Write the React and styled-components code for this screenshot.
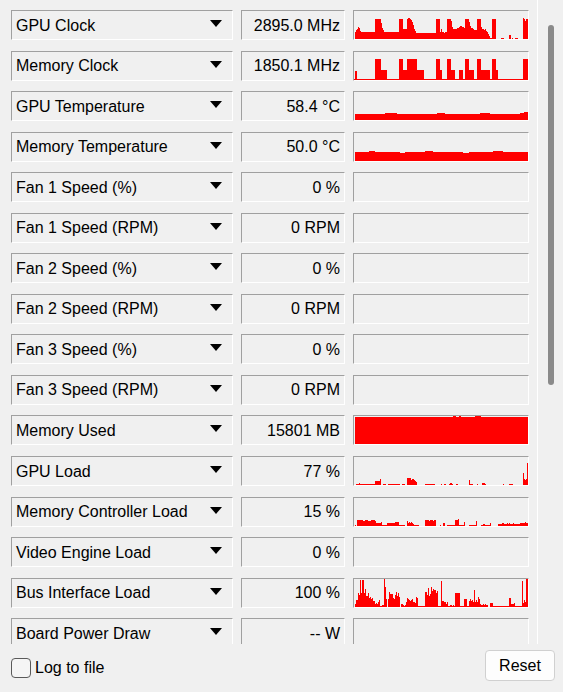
import React from 'react';
import styled, { createGlobalStyle } from 'styled-components';

const GlobalStyle = createGlobalStyle`
  html, body {
    margin: 0;
    padding: 0;
    background: #f0f0f0;
    overflow: hidden;
  }
  body {
    font-family: "Liberation Sans", Arial, sans-serif;
    font-size: 16px;
    color: #000;
  }
`;

// tiny seeded random so the graphs look the same on every run
const makeRandom = (seed) => () => {
  seed = (seed * 16807) % 2147483647;
  return seed / 2147483647;
};

// spec is a list of [width, height] or [width, minHeight, maxHeight]
const buildGraph = (spec, seed = 11) => {
  const rand = makeRandom(seed);
  const out = [];
  spec.forEach(([w, lo, hi]) => {
    for (let i = 0; i < w; i++) {
      out.push(hi == null ? lo : Math.round(lo + rand() * (hi - lo)));
    }
  });
  return out;
};

const graphs = {
  gpuClock: buildGraph([
    [1, 0], [1, 7], [1, 9], [1, 10], [1, 12], [1, 11], [1, 8],
    [14, 7], [6, 20], [1, 16], [1, 11], [1, 9], [15, 7],
    [4, 20], [4, 10],
    [1, 20], [2, 21], [1, 20], [1, 19], [1, 17], [1, 14], [1, 10], [1, 8],
    [20, 6], [4, 20],
    [1, 7], [1, 10], [2, 7], [1, 6], [2, 7],
    [4, 20], [1, 18], [1, 12], [4, 10],
    [2, 11], [1, 12], [2, 13], [2, 12], [1, 11],
    [4, 20], [1, 17], [1, 13], [2, 11], [1, 10], [3, 9],
    [4, 20], [1, 12], [2, 10], [1, 9], [1, 10], [1, 8], [1, 7], [1, 5], [1, 3],
    [2, 1], [4, 20],
    [5, 0], [3, 1], [5, 0], [2, 4], [1, 0], [1, 1], [2, 0], [3, 1], [5, 0],
    [1, 21], [1, 20], [1, 18], [2, 20],
  ]),
  memClock: buildGraph([
    [1, 1], [2, 9], [18, 1], [6, 21], [6, 10], [12, 1], [4, 21], [4, 10],
    [10, 21], [7, 10], [12, 1], [4, 21], [2, 10], [5, 1], [4, 21], [4, 10],
    [4, 1], [4, 10], [2, 1], [4, 21], [5, 10], [3, 1], [4, 21], [9, 10],
    [2, 1], [4, 21], [2, 10], [25, 1], [5, 21],
  ]),
  gpuTemp: buildGraph([
    [1, 0], [30, 6], [12, 7], [40, 6], [8, 7], [35, 6], [10, 7], [30, 6], [4, 7], [4, 8],
  ]),
  memTemp: buildGraph([
    [1, 0], [14, 9], [6, 10], [25, 9], [5, 8], [20, 9], [8, 10], [30, 9],
    [6, 8], [24, 9], [10, 10], [25, 9],
  ]),
  memUsed: buildGraph([
    [1, 0], [98, 27], [3, 28], [3, 27], [2, 28], [14, 27], [6, 28], [47, 27],
  ]),
  gpuLoad: buildGraph([
    [2, 0], [3, 1], [1, 2], [15, 1], [5, 4], [1, 6], [2, 0], [3, 1], [2, 0],
    [12, 1], [2, 0], [3, 1], [2, 0], [4, 7],
    [1, 5], [1, 6], [1, 6], [1, 5], [1, 4], [1, 3],
    [8, 0], [10, 1], [6, 0], [1, 1], [2, 0], [2, 1], [3, 0],
    [1, 1], [2, 2], [1, 1], [3, 0], [2, 1], [11, 0],
    [1, 5], [3, 1], [4, 0], [1, 1], [4, 0], [3, 2], [1, 1], [17, 0],
    [1, 1], [5, 0], [4, 1], [10, 0],
    [1, 12], [1, 6], [1, 5], [1, 6], [1, 22],
  ]),
  memCtrlLoad: buildGraph([
    [1, 0], [1, 1], [1, 0], [6, 6], [2, 5], [3, 6], [3, 5], [4, 6], [1, 5],
    [5, 3], [1, 4], [5, 1], [8, 3], [4, 4], [6, 1], [2, 0],
    [1, 5], [1, 3], [1, 4], [1, 3], [1, 4], [1, 3], [1, 2],
    [5, 1], [6, 0], [4, 6], [1, 5], [3, 6], [1, 5], [2, 6], [4, 0],
    [1, 1], [2, 0], [2, 3], [2, 0], [8, 1], [3, 6], [1, 7], [5, 1], [1, 4],
    [4, 0], [7, 1], [1, 5], [4, 0], [2, 1], [2, 2], [5, 1], [1, 3], [7, 0],
    [25, 2, 3], [2, 3], [1, 4], [2, 3],
  ], 3),
  busLoad: buildGraph([
    [1, 0], [3, 3, 8], [2, 11, 15], [1, 27], [1, 14], [2, 27], [6, 8, 18],
    [5, 6, 10], [5, 3, 8], [4, 1, 2], [1, 28], [1, 20], [1, 8], [1, 0],
    [12, 8, 15], [1, 0], [5, 1, 3], [12, 4, 10], [7, 1], [13, 10, 20],
    [3, 1], [1, 26], [6, 3, 6], [7, 1, 2], [5, 14], [4, 1], [3, 8], [2, 1],
    [5, 4, 10], [1, 17], [5, 4, 10], [8, 1, 3], [2, 0], [3, 4], [5, 1],
    [11, 1], [2, 9], [4, 2, 4], [7, 1], [1, 26], [3, 4, 8], [2, 28],
  ], 21),
};

const sensors = [
  { name: 'GPU Clock', value: '2895.0 MHz', graph: graphs.gpuClock },
  { name: 'Memory Clock', value: '1850.1 MHz', graph: graphs.memClock },
  { name: 'GPU Temperature', value: '58.4 °C', graph: graphs.gpuTemp },
  { name: 'Memory Temperature', value: '50.0 °C', graph: graphs.memTemp },
  { name: 'Fan 1 Speed (%)', value: '0 %' },
  { name: 'Fan 1 Speed (RPM)', value: '0 RPM' },
  { name: 'Fan 2 Speed (%)', value: '0 %' },
  { name: 'Fan 2 Speed (RPM)', value: '0 RPM' },
  { name: 'Fan 3 Speed (%)', value: '0 %' },
  { name: 'Fan 3 Speed (RPM)', value: '0 RPM' },
  { name: 'Memory Used', value: '15801 MB', graph: graphs.memUsed },
  { name: 'GPU Load', value: '77 %', graph: graphs.gpuLoad },
  { name: 'Memory Controller Load', value: '15 %', graph: graphs.memCtrlLoad },
  { name: 'Video Engine Load', value: '0 %' },
  { name: 'Bus Interface Load', value: '100 %', graph: graphs.busLoad },
  { name: 'Board Power Draw', value: '-- W' },
];

const Window = styled.div`
  width: 563px;
  height: 692px;
  display: flex;
  flex-direction: column;
  background: #f0f0f0;
`;

const Viewport = styled.div`
  display: flex;
  height: 644px;
  flex-shrink: 0;
`;

const List = styled.div`
  width: 537px;
  box-sizing: border-box;
  padding: 10px 0 0 11px;
  display: flex;
  flex-direction: column;
  gap: 10.55px;
  overflow: hidden;
`;

const Row = styled.div`
  display: grid;
  grid-template-columns: 222px 104px 176px;
  column-gap: 8px;
  height: 30px;
  flex-shrink: 0;
`;

// sunken 1px frame: dark top/left, white bottom/right
const Sunken = styled.div`
  box-sizing: border-box;
  height: 30px;
  border-top: 1px solid #a0a0a0;
  border-left: 1px solid #a0a0a0;
  border-bottom: 1px solid #ffffff;
  border-right: 1px solid #ffffff;
`;

const LabelBox = styled(Sunken)`
  display: flex;
  align-items: center;
  justify-content: space-between;
  padding: 1px 10px 0 4px;
  white-space: nowrap;
`;

const DropArrow = styled.span`
  width: 0;
  height: 0;
  border-left: 6.5px solid transparent;
  border-right: 6.5px solid transparent;
  border-top: 7px solid #000;
  margin-top: -4px;
`;

const ValueBox = styled(Sunken)`
  display: flex;
  align-items: center;
  justify-content: flex-end;
  padding: 1px 4px 0 0;
  white-space: nowrap;
`;

const GraphBox = styled(Sunken)`
  overflow: hidden;
  svg {
    display: block;
  }
`;

const ScrollTrack = styled.div`
  flex: 1;
  border-left: 1px solid #ffffff;
`;

const Thumb = styled.div`
  width: 6px;
  height: 360px;
  margin: 25px 0 0 10px;
  border-radius: 3px;
  background: #8a8a8a;
`;

const Footer = styled.div`
  flex: 1;
  display: flex;
  align-items: center;
  justify-content: space-between;
  padding: 0 8px 0 11px;
`;

const CheckLabel = styled.label`
  display: flex;
  align-items: center;
  gap: 4px;
  margin-top: -1px;
`;

const CheckBox = styled.span`
  width: 20px;
  height: 20px;
  box-sizing: border-box;
  border: 1px solid #5a5a5a;
  border-radius: 4px;
  background: #f5f5f5;
`;

const ResetButton = styled.button`
  align-self: flex-start;
  margin-top: 6px;
  width: 70px;
  height: 31px;
  box-sizing: border-box;
  border: 1px solid #d0d0d0;
  border-radius: 4px;
  background: #fdfdfd;
  font-family: "Liberation Sans", Arial, sans-serif;
  font-size: 16px;
  color: #000;
  padding: 0;
`;

const Graph = ({ data }) => {
  let d = '';
  (data || []).forEach((h, x) => {
    if (h > 0) d += `M${x} ${28 - h}h1v${h}h-1z`;
  });
  return (
    <svg width="174" height="28" viewBox="0 0 174 28" shapeRendering="crispEdges">
      {d && <path d={d} fill="#ff0000" />}
    </svg>
  );
};

const SensorRow = ({ sensor }) => (
  <Row>
    <LabelBox>
      <span>{sensor.name}</span>
      <DropArrow />
    </LabelBox>
    <ValueBox>{sensor.value}</ValueBox>
    <GraphBox>
      <Graph data={sensor.graph} />
    </GraphBox>
  </Row>
);

export default function App() {
  return (
    <Window>
      <GlobalStyle />
      <Viewport>
        <List>
          {sensors.map((s) => (
            <SensorRow key={s.name} sensor={s} />
          ))}
        </List>
        <ScrollTrack>
          <Thumb />
        </ScrollTrack>
      </Viewport>
      <Footer>
        <CheckLabel>
          <CheckBox />
          Log to file
        </CheckLabel>
        <ResetButton>Reset</ResetButton>
      </Footer>
    </Window>
  );
}
